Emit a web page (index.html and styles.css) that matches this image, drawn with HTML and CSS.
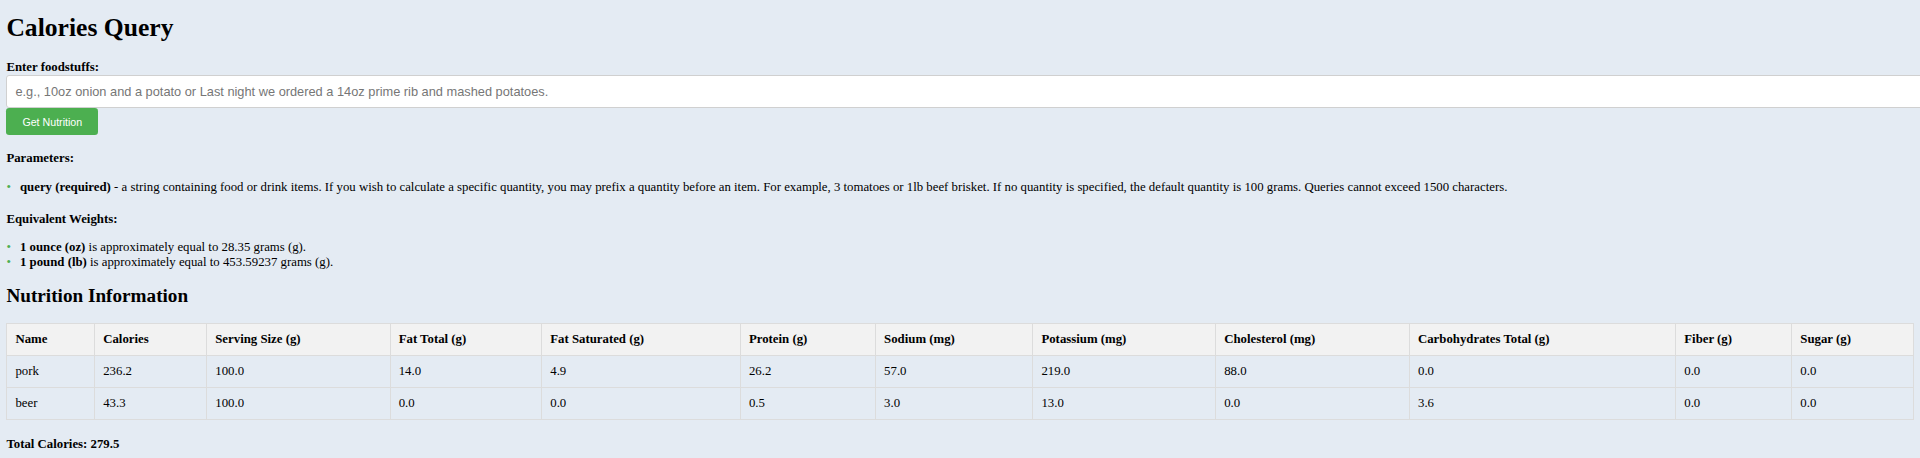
FILE: index.html
```html
<!DOCTYPE html>
<html lang="en">
<head>
<meta charset="utf-8">
<title>Calories Query</title>
<link rel="stylesheet" href="styles.css">
</head>
<body>
<div class="page">
  <h1 class="title">Calories Query</h1>
  <form class="query-form">
    <label class="field-label" for="query">Enter foodstuffs:</label>
    <input class="query-input" id="query" type="text" placeholder="e.g., 10oz onion and a potato or Last night we ordered a 14oz prime rib and mashed potatoes.">
    <button class="submit-btn" type="button">Get Nutrition</button>
  </form>

  <p class="section-label params-label">Parameters:</p>
  <ul class="bullets">
    <li><strong>query (required)</strong> - a string containing food or drink items. If you wish to calculate a specific quantity, you may prefix a quantity before an item. For example, 3 tomatoes or 1lb beef brisket. If no quantity is specified, the default quantity is 100 grams. Queries cannot exceed 1500 characters.</li>
  </ul>

  <p class="section-label weights-label">Equivalent Weights:</p>
  <ul class="bullets">
    <li><strong>1 ounce (oz)</strong> is approximately equal to 28.35 grams (g).</li>
    <li><strong>1 pound (lb)</strong> is approximately equal to 453.59237 grams (g).</li>
  </ul>

  <h2 class="subtitle">Nutrition Information</h2>
  <table class="nutrition">
    <thead>
      <tr>
        <th>Name</th><th>Calories</th><th>Serving Size (g)</th><th>Fat Total (g)</th><th>Fat Saturated (g)</th><th>Protein (g)</th><th>Sodium (mg)</th><th>Potassium (mg)</th><th>Cholesterol (mg)</th><th>Carbohydrates Total (g)</th><th>Fiber (g)</th><th>Sugar (g)</th>
      </tr>
    </thead>
    <tbody>
      <tr>
        <td>pork</td><td>236.2</td><td>100.0</td><td>14.0</td><td>4.9</td><td>26.2</td><td>57.0</td><td>219.0</td><td>88.0</td><td>0.0</td><td>0.0</td><td>0.0</td>
      </tr>
      <tr>
        <td>beer</td><td>43.3</td><td>100.0</td><td>0.0</td><td>0.0</td><td>0.5</td><td>3.0</td><td>13.0</td><td>0.0</td><td>3.6</td><td>0.0</td><td>0.0</td>
      </tr>
    </tbody>
  </table>
  <p class="total">Total Calories: 279.5</p>
</div>
</body>
</html>
```

FILE: styles.css
```css
html, body {
  margin: 0;
  padding: 0;
}

body {
  background-color: #e4ebf3;
  color: #000;
  font-family: "Liberation Serif", "Times New Roman", serif;
  font-size: 12.8px;
}

.page {
  padding: 0 6.4px 6px;
  overflow-x: clip;
}

.title {
  font-size: 25.6px;
  font-weight: bold;
  margin: 12.6px 0 17px;
}

.query-form {
  margin: 0;
}

.field-label {
  display: block;
  font-weight: bold;
  margin-bottom: 0.6px;
}

.query-input {
  display: block;
  width: 100%;
  box-sizing: content-box;
  padding: 8px;
  margin: 0;
  border: 1px solid #d0d0d0;
  border-radius: 3px;
  background: #fff;
  font-family: "Liberation Sans", Arial, sans-serif;
  font-size: 12.8px;
  line-height: normal;
  color: #000;
}

.query-input::placeholder {
  color: #767676;
}

.submit-btn {
  display: block;
  margin: 0;
  padding: 7.6px 16px;
  border: none;
  border-radius: 3.2px;
  background-color: #4caf50;
  color: #fff;
  font-family: "Liberation Sans", Arial, sans-serif;
  font-size: 10.67px;
  line-height: normal;
  cursor: pointer;
}

.section-label {
  font-weight: bold;
  margin: 0;
}

.params-label {
  margin-top: 15.9px;
  margin-bottom: 13.7px;
}

.weights-label {
  margin-top: 16.6px;
  margin-bottom: 13.3px;
}

.bullets {
  list-style: none;
  margin: 0;
  padding: 0;
}

.bullets li::before {
  content: "\2022";
  color: #4caf50;
  display: inline-block;
  width: 13.6px;
}

.subtitle {
  font-size: 19.2px;
  font-weight: bold;
  margin: 15.6px 0 16px;
}

.nutrition {
  width: 100%;
  border-collapse: collapse;
}

.nutrition th,
.nutrition td {
  border: 1px solid #dcdcdc;
  padding: 8px;
  text-align: left;
  font-size: 12.8px;
}

.nutrition th {
  background-color: #f2f2f2;
  font-weight: bold;
}

.total {
  font-weight: bold;
  margin: 16.7px 0 0;
}
```
